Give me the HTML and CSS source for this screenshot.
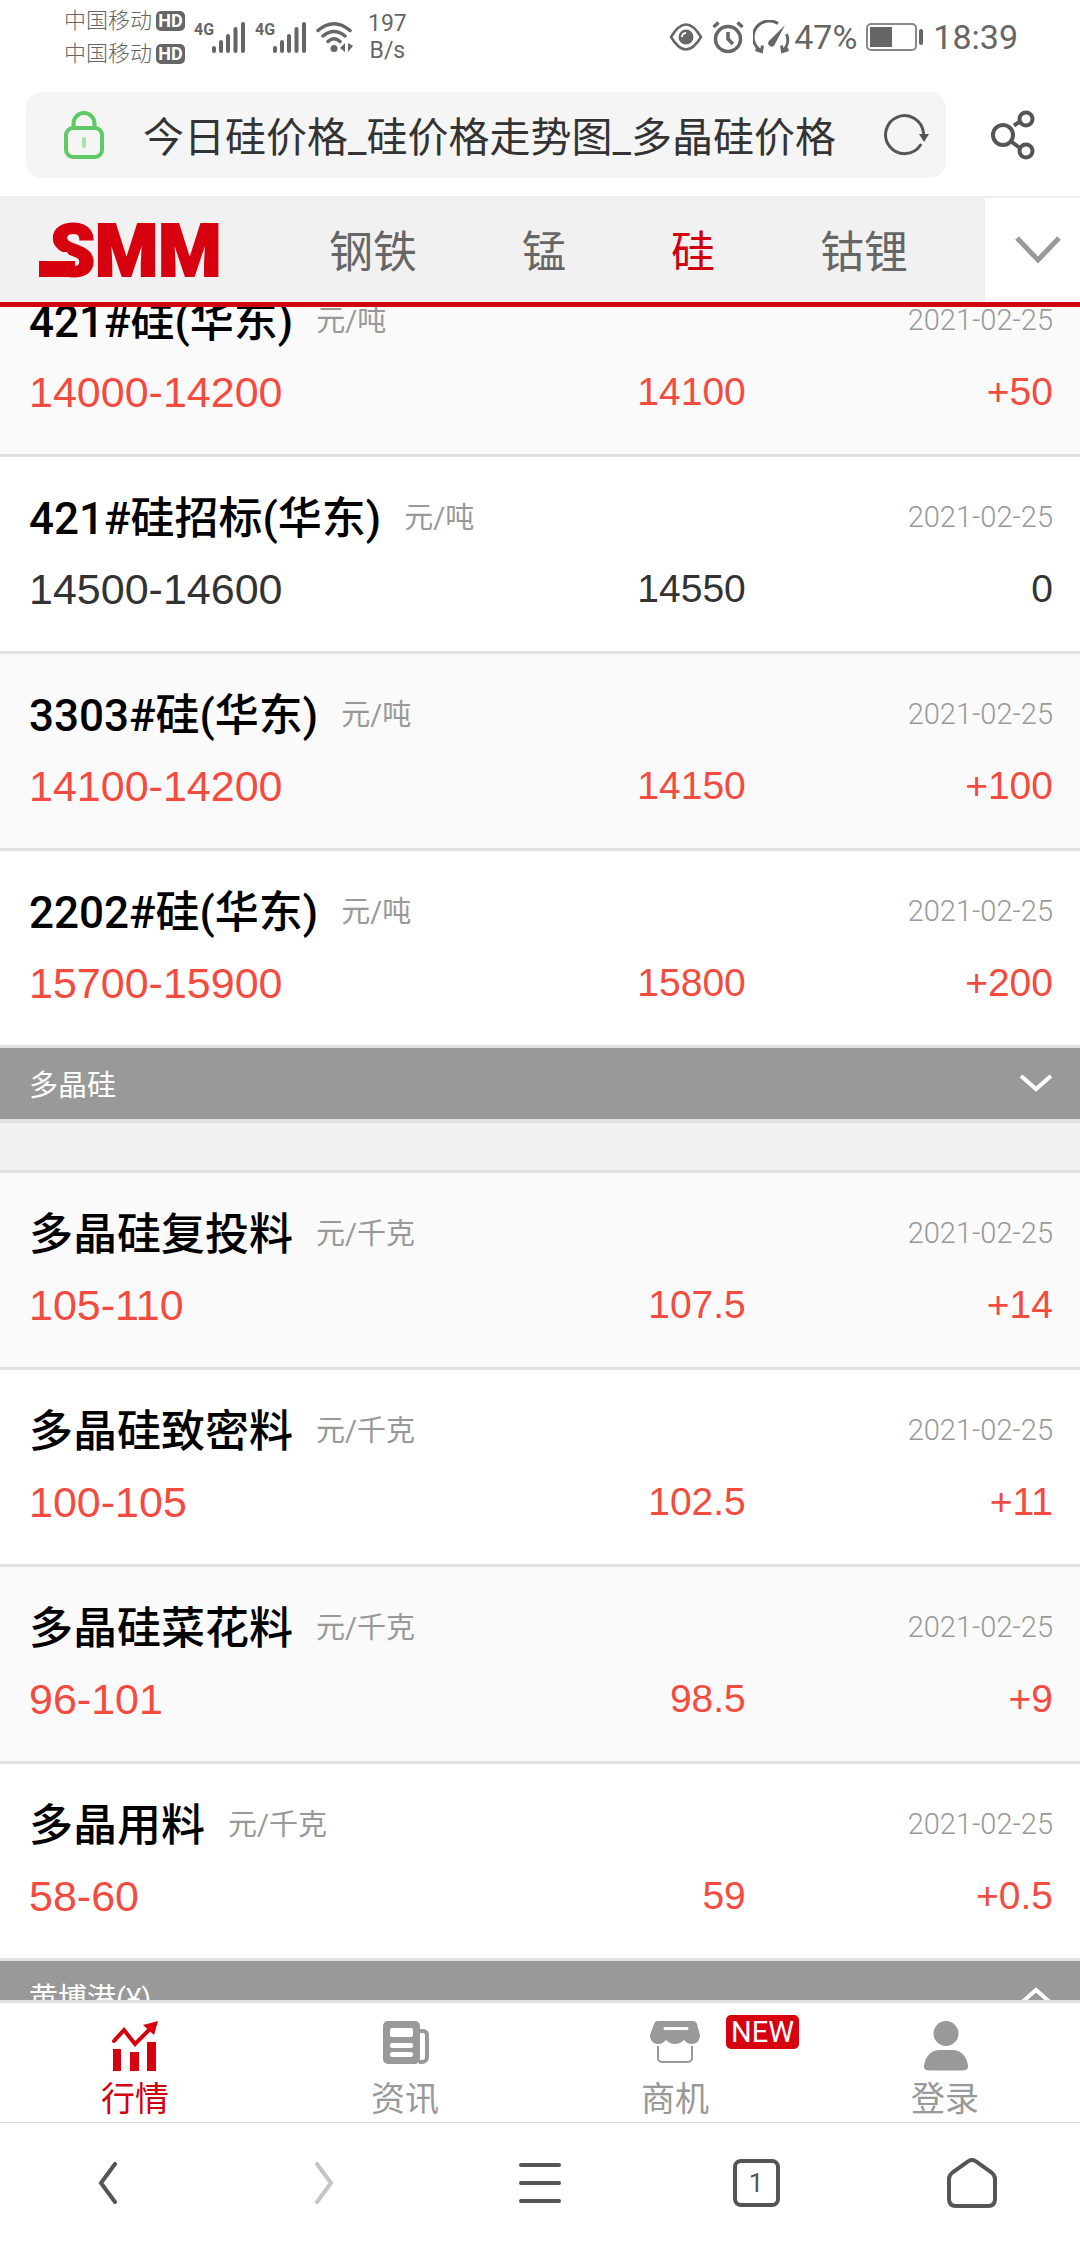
FILE: index.html
```html
<!DOCTYPE html>
<html lang="zh-CN">
<head>
    <meta charset="UTF-8">
    <meta name="viewport" content="width=device-width, initial-scale=1.0">
    <title>今日硅价格_硅价格走势图_多晶硅价格</title>
    <link rel="stylesheet" href="styles.css">
</head>
<body>
    <div class="status-bar">
        <div class="status-left">
            <div class="carriers">
                <div class="carrier">中国移动<span class="hd">HD</span></div>
                <div class="carrier">中国移动<span class="hd">HD</span></div>
            </div>
            <svg class="signal" width="52" height="32" viewBox="0 0 52 32">
                <text x="0" y="14">4G</text>
                <path d="M20 27v3M27 21v9M34 15v15M41.500 8v22M49 3v27" />
            </svg>
            <svg class="signal" width="52" height="32" viewBox="0 0 52 32">
                <text x="0" y="14">4G</text>
                <path d="M20 27v3M27 21v9M34 15v15M41.500 8v22M49 3v27" />
            </svg>
            <svg class="wifi" width="38" height="32" viewBox="0 0 38 32">
                <path d="M2 9.500Q18 -4 34 9.500M7 15Q18 6 29 15M12 20.500Q18 15 24 20.500" fill="none" stroke="#666" stroke-width="3.500" stroke-linecap="round" />
                <circle cx="18" cy="27.500" r="3.500" fill="#666" />
                <path d="M29 22v9l-5-4zM32 22v9l5-6z" fill="#666" />
            </svg>
            <div class="speed"><span>197</span><span>B/s</span></div>
        </div>
        <div class="status-right">
            <svg class="eye" width="34" height="28" viewBox="0 0 34 28">
                <path d="M2 14Q17 -11 32 14Q17 39 2 14z" fill="none" stroke="#666" stroke-width="2.500" stroke-linejoin="round" />
                <circle cx="17" cy="14" r="7.500" fill="#666" />
                <path d="M13 14a4 4 0 0 1 4-4" fill="none" stroke="#fff" stroke-width="2" />
            </svg>
            <svg class="alarm" width="32" height="32" viewBox="0 0 32 32">
                <circle cx="16" cy="18" r="12.500" fill="none" stroke="#666" stroke-width="3.500" />
                <path d="M16 11v7l5 5M1.500 6l5-4.500M30.500 6l-5-4.500" fill="none" stroke="#666" stroke-width="3.500" />
            </svg>
            <svg class="gauge" width="38" height="34" viewBox="0 0 38 34">
                <path d="M25 3.500A15.500 15.500 0 0 0 7.500 30.500M2.500 29.500l6 2 1-6M33.500 14a15.500 15.500 0 0 1-3 16.500M28.500 25.500l1 6 6-2" fill="none" stroke="#666" stroke-width="3" />
                <path d="M32 5L17 20a3.500 3.500 0 1 0 5 4z" fill="#666" />
            </svg>
            <span class="battery-level">47%</span>
            <svg class="battery" width="58" height="28" viewBox="0 0 58 28">
                <rect x="1" y="1" width="49" height="26" rx="4" fill="none" stroke="#888" stroke-width="2" />
                <rect x="4" y="4" width="22" height="20" fill="#666" />
                <rect x="53" y="6" width="4" height="16" rx="2" fill="#666" />
            </svg>
            <span class="clock">18:39</span>
        </div>
    </div>

    <header class="browser-bar">
        <div class="address">
            <svg class="lock" width="40" height="48" viewBox="0 0 40 48">
                <path d="M9.500 17v-4.500a10.500 10.500 0 0 1 21 0V17" fill="none" stroke="#5fc966" stroke-width="4" />
                <rect x="2" y="17" width="36" height="29" rx="7" fill="none" stroke="#5fc966" stroke-width="4" />
                <path d="M20 28v7" stroke="#a9e2ac" stroke-width="4" stroke-linecap="round" />
            </svg>
            <input class="address-input" type="text" aria-label="地址栏" value="今日硅价格_硅价格走势图_多晶硅价格" readonly>
            <button class="icon-button" type="button" aria-label="刷新">
                <svg width="46" height="42" viewBox="0 0 46 42">
                    <path d="M37.500 31A19 19 0 1 1 40.500 19" fill="none" stroke="#555" stroke-width="3" stroke-linecap="round" />
                    <path d="M36 20h10l-5 8z" fill="#555" />
                </svg>
            </button>
        </div>
        <button class="icon-button share" type="button" aria-label="分享">
            <svg width="44" height="50" viewBox="0 0 44 50">
                <g fill="none" stroke="#555" stroke-width="4">
                    <circle cx="12" cy="25" r="10" />
                    <circle cx="35" cy="9" r="6.500" />
                    <circle cx="35" cy="41" r="6.500" />
                    <path d="M23 15.500l7-4.500M20 31.500l9 6.500" />
                </g>
            </svg>
        </button>
    </header>

    <nav class="metal-nav">
        <a class="logo" href="#" aria-label="SMM">
            <svg width="182" height="90" viewBox="0 0 182 90">
                <text x="11" y="71">SMM</text>
                <path class="logo-gap" d="M8 47h20l6 9H8z" />
                <rect x="0" y="56" width="36" height="16" />
            </svg>
        </a>
        <div class="metal-links">
            <a href="#">钢铁</a>
            <a href="#">锰</a>
            <a class="active" href="#">硅</a>
            <a href="#">钴锂</a>
        </div>
        <button class="nav-more" type="button" aria-label="更多">
            <svg width="46" height="28" viewBox="0 0 46 28">
                <path d="M2 2l21 22L44 2" fill="none" stroke="#999" stroke-width="5" />
            </svg>
        </button>
    </nav>

    <main class="content">
        <div class="price-list">
            <table class="prices">
                <tbody>
                    <tr class="up">
                        <td class="name">421#硅(华东)<small>元/吨</small></td>
                        <td class="date">2021-02-25</td>
                        <td class="range">14000-14200</td>
                        <td class="average">14100</td>
                        <td class="change">+50</td>
                    </tr>
                    <tr>
                        <td class="name">421#硅招标(华东)<small>元/吨</small></td>
                        <td class="date">2021-02-25</td>
                        <td class="range">14500-14600</td>
                        <td class="average">14550</td>
                        <td class="change">0</td>
                    </tr>
                    <tr class="up">
                        <td class="name">3303#硅(华东)<small>元/吨</small></td>
                        <td class="date">2021-02-25</td>
                        <td class="range">14100-14200</td>
                        <td class="average">14150</td>
                        <td class="change">+100</td>
                    </tr>
                    <tr class="up">
                        <td class="name">2202#硅(华东)<small>元/吨</small></td>
                        <td class="date">2021-02-25</td>
                        <td class="range">15700-15900</td>
                        <td class="average">15800</td>
                        <td class="change">+200</td>
                    </tr>
                </tbody>
            </table>

            <button class="group-title" type="button">
                <span>多晶硅</span>
                <svg width="34" height="20" viewBox="0 0 34 20">
                    <path d="M2 3l15 13L32 3" fill="none" stroke="#fff" stroke-width="4" />
                </svg>
            </button>
            <div class="group-gap"></div>

            <table class="prices">
                <tbody>
                    <tr class="up">
                        <td class="name">多晶硅复投料<small>元/千克</small></td>
                        <td class="date">2021-02-25</td>
                        <td class="range">105-110</td>
                        <td class="average">107.5</td>
                        <td class="change">+14</td>
                    </tr>
                    <tr class="up">
                        <td class="name">多晶硅致密料<small>元/千克</small></td>
                        <td class="date">2021-02-25</td>
                        <td class="range">100-105</td>
                        <td class="average">102.5</td>
                        <td class="change">+11</td>
                    </tr>
                    <tr class="up">
                        <td class="name">多晶硅菜花料<small>元/千克</small></td>
                        <td class="date">2021-02-25</td>
                        <td class="range">96-101</td>
                        <td class="average">98.5</td>
                        <td class="change">+9</td>
                    </tr>
                    <tr class="up">
                        <td class="name">多晶用料<small>元/千克</small></td>
                        <td class="date">2021-02-25</td>
                        <td class="range">58-60</td>
                        <td class="average">59</td>
                        <td class="change">+0.5</td>
                    </tr>
                </tbody>
            </table>

            <button class="group-title" type="button">
                <span>黄博港(¥)</span>
                <svg width="34" height="20" viewBox="0 0 34 20">
                    <path d="M2 17L17 4l15 13" fill="none" stroke="#fff" stroke-width="4" />
                </svg>
            </button>
        </div>
    </main>

    <nav class="tab-bar">
        <a class="tab active" href="#">
            <svg width="50" height="50" viewBox="0 0 50 50">
                <path d="M3 28h8v22H3zM20 31h9v19h-9zM37 21h9v29h-9z" fill="#d7000f" />
                <path d="M4 20L14 9l11 14L40 8" fill="none" stroke="#d7000f" stroke-width="4" stroke-linecap="round" />
                <path d="M48 0L33 4l11 10z" fill="#d7000f" />
            </svg>
            <span>行情</span>
        </a>
        <a class="tab" href="#">
            <svg width="50" height="50" viewBox="0 0 50 50">
                <path d="M37 10h6a4 4 0 0 1 4 4v22a5 5 0 0 1-5 5h-3" fill="none" stroke="#999" stroke-width="4" />
                <rect x="3" y="0" width="37" height="43" rx="5" fill="#999" />
                <rect x="10" y="7" width="23" height="9" rx="2" fill="#fff" />
                <rect x="10" y="22" width="23" height="5" rx="2" fill="#fff" />
                <rect x="10" y="31" width="23" height="5" rx="2" fill="#fff" />
                <path d="M42 14v22" stroke="#fff" stroke-width="4" stroke-linecap="round" />
            </svg>
            <span>资讯</span>
        </a>
        <a class="tab" href="#">
            <svg width="50" height="50" viewBox="0 0 50 50">
                <path d="M8 0h35q3 0 4 3l3 11c0 5-3 9-8 9-4 0-6-2-8-4-2 2-5 4-9 4s-7-2-9-4c-2 2-4 4-8 4-5 0-8-4-8-9L4 3q1-3 4-3z" fill="#999" />
                <path d="M15 7.500h22" stroke="#fff" stroke-width="3" stroke-linecap="round" />
                <path d="M8 25v12a4 4 0 0 0 4 4h26a4 4 0 0 0 4-4V25" fill="none" stroke="#999" stroke-width="2" />
            </svg>
            <span>商机</span>
            <em class="badge">NEW</em>
        </a>
        <a class="tab" href="#">
            <svg width="50" height="50" viewBox="0 0 50 50">
                <circle cx="26" cy="12.500" r="12.500" fill="#999" />
                <path d="M19 29h14c10 0 15 10 15 17q0 3-5 3.500H9Q4 49 4 46c0-7 5-17 15-17z" fill="#999" />
            </svg>
            <span>登录</span>
        </a>
    </nav>

    <footer class="browser-tools">
        <button class="icon-button" type="button" aria-label="后退">
            <svg width="20" height="42" viewBox="0 0 20 42">
                <path d="M17 2L3 21l14 19" fill="none" stroke="#555" stroke-width="4" stroke-linecap="round" />
            </svg>
        </button>
        <button class="icon-button" type="button" aria-label="前进">
            <svg width="20" height="42" viewBox="0 0 20 42">
                <path d="M3 2l14 19L3 40" fill="none" stroke="#c4c4c4" stroke-width="4" stroke-linecap="round" />
            </svg>
        </button>
        <button class="icon-button" type="button" aria-label="菜单">
            <svg width="42" height="42" viewBox="0 0 42 42">
                <path d="M2 3h38M2 21h38M2 39h38" stroke="#555" stroke-width="4" stroke-linecap="round" />
            </svg>
        </button>
        <button class="icon-button" type="button" aria-label="标签页">
            <span class="tab-count">1</span>
        </button>
        <button class="icon-button" type="button" aria-label="主页">
            <svg width="50" height="50" viewBox="0 0 50 50">
                <path d="M21 3.500q4-3 8 0L44 14q4 3 4 7v20q0 7-7 7H9q-7 0-7-7V21q0-4 4-7z" fill="none" stroke="#555" stroke-width="4" />
            </svg>
        </button>
    </footer>
</body>
</html>
```

FILE: styles.css
```css
* {
    box-sizing: border-box;
}

body {
    margin: 0;
    height: 100vh;
    display: flex;
    flex-direction: column;
    overflow: hidden;
    background: #fff;
    color: #333;
    font-family: Roboto, "Noto Sans CJK SC", sans-serif;
}

a {
    text-decoration: none;
    color: inherit;
}

svg {
    display: block;
    flex: none;
}

button {
    margin: 0;
    padding: 0;
    border: none;
    background: none;
    font-family: inherit;
    cursor: pointer;
}

.icon-button {
    display: flex;
    align-items: center;
    justify-content: center;
}

/* phone status bar */
.status-bar {
    flex: none;
    display: flex;
    align-items: center;
    justify-content: space-between;
    height: 74px;
    margin-bottom: 18px;
    padding: 0 62px 0 64px;
    color: #666;
}

.status-left,
.status-right {
    display: flex;
    align-items: center;
}

.status-left {
    gap: 9px;
}

.status-right {
    gap: 9px;
    font-size: 34px;
    line-height: 40px;
}

.carrier {
    display: flex;
    align-items: center;
    gap: 4px;
    font-size: 22px;
    line-height: 33px;
    font-weight: 300;
}

.hd {
    width: 29px;
    height: 20px;
    border-radius: 5px;
    background: #666;
    color: #fff;
    font-size: 18px;
    line-height: 20px;
    font-weight: 700;
    text-align: center;
}

.signal text {
    font-size: 16px;
    font-weight: 700;
    fill: #666;
}

.signal path {
    stroke: #666;
    stroke-width: 4;
    stroke-linecap: round;
}

.speed {
    display: flex;
    flex-direction: column;
    align-items: center;
    margin-left: 5px;
    font-size: 23px;
    line-height: 27px;
}

.battery-level {
    margin-left: -6px;
}

/* address bar */
.browser-bar {
    flex: none;
    display: flex;
    padding: 0 0 18px 26px;
}

.address {
    flex: 1;
    display: flex;
    align-items: center;
    height: 86px;
    padding: 0 17px 0 38px;
    border-radius: 16px;
    background: #f5f5f5;
}

.address-input {
    flex: 1;
    min-width: 0;
    margin: 0 30px 0 39px;
    padding: 5px 0 0;
    border: none;
    outline: none;
    background: none;
    color: #333;
    font-family: inherit;
    font-size: 41px;
    line-height: 60px;
}

.share {
    width: 134px;
}

/* metal categories */
.metal-nav {
    flex: none;
    display: flex;
    align-items: center;
    height: 111px;
    border-top: 2px solid #eee;
    border-bottom: 5px solid #d0000f;
    background: #f1f1f1;
}

.logo {
    margin-left: 39px;
    fill: #d7000f;
}

.logo text {
    font-family: Roboto, sans-serif;
    font-size: 72px;
    font-weight: 900;
    stroke: #d7000f;
    stroke-width: 2px;
}

.logo-gap {
    fill: #f1f1f1;
}

.metal-links {
    flex: 1;
    display: flex;
    gap: 105px;
    margin-left: 108px;
    padding-top: 5px;
    color: #666;
    font-size: 44px;
    line-height: 60px;
}

.metal-links .active {
    color: #d0000f;
}

.nav-more {
    display: flex;
    align-items: center;
    justify-content: center;
    align-self: stretch;
    width: 95px;
    padding-left: 11px;
    background: #fff;
}

/* price list */
.content {
    flex: 1;
    min-height: 0;
    overflow: hidden;
}

.price-list {
    margin-top: -47px;
}

.prices,
.prices tbody {
    display: block;
}

.prices tr {
    display: grid;
    grid-template-columns: 1fr 1fr 30%;
    grid-template-areas:
        "name name date"
        "range average change";
    row-gap: 14px;
    padding: 34px 27px 34px 29px;
    border-bottom: 3px solid #e1e1e1;
    background: #fff;
    line-height: 56px;
}

.prices tr:nth-child(odd) {
    background: #fafafa;
}

.prices td {
    padding: 0;
    white-space: nowrap;
}

.prices .name {
    grid-area: name;
    display: flex;
    color: #000;
    font-size: 44px;
    font-weight: 500;
}

.name small {
    margin-left: 23px;
    color: #999;
    font-size: 29px;
    line-height: 54px;
    font-weight: 400;
}

.prices .date {
    grid-area: date;
    color: #999;
    font-size: 29px;
    line-height: 52px;
    font-weight: 300;
    text-align: right;
}

.range,
.average,
.change {
    font-family: "Liberation Sans", Arial, sans-serif;
    font-size: 39px;
    text-align: right;
}

.range {
    grid-area: range;
    font-size: 43px;
    text-align: left;
}

.average {
    grid-area: average;
}

.change {
    grid-area: change;
}

.up .range,
.up .average,
.up .change {
    color: #f44b40;
}

.group-title {
    display: flex;
    align-items: center;
    justify-content: space-between;
    width: 100%;
    height: 71px;
    padding: 0 27px 2px 29px;
    background: #999;
    color: #fff;
    font-size: 29px;
}

.group-gap {
    height: 54px;
    border-top: 4px solid #e1e1e1;
    border-bottom: 3px solid #e1e1e1;
    background: #f1f1f1;
}

/* site tabs */
.tab-bar {
    flex: none;
    display: flex;
    border-top: 3px solid #e1e1e1;
    border-bottom: 1px solid #ddd;
}

.tab {
    position: relative;
    flex: 1;
    display: flex;
    flex-direction: column;
    align-items: center;
    gap: 8px;
    padding: 18px 0 3px;
    color: #999;
    font-size: 34px;
    line-height: 40px;
}

.tab.active {
    color: #d0000f;
}

.badge {
    position: absolute;
    top: 12px;
    left: calc(50% + 51px);
    width: 73px;
    border-radius: 5px;
    background: #d7000f;
    color: #fff;
    font-size: 29px;
    line-height: 34px;
    font-style: normal;
    text-align: center;
}

/* browser toolbar */
.browser-tools {
    flex: none;
    display: flex;
    height: 121px;
    padding-bottom: 2px;
}

.browser-tools .icon-button {
    flex: 1;
}

.tab-count {
    width: 47px;
    height: 48px;
    border: 4px solid #555;
    border-radius: 8px;
    color: #555;
    font-size: 26px;
    line-height: 40px;
}
```
